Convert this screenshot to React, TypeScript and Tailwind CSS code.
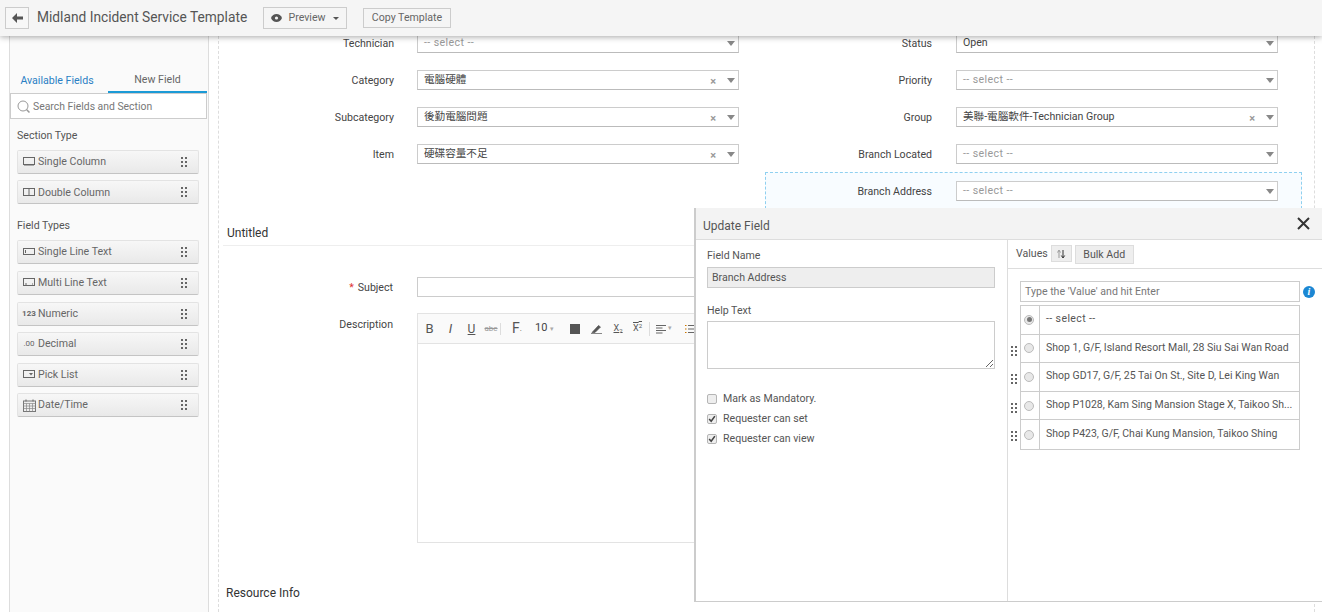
import { ReactNode } from "react";

const cjk = "font-['Roboto','Noto_Sans_CJK_TC',sans-serif]";

function Grip({ className = "" }: { className?: string }) {
  return (
    <svg width="6" height="10" viewBox="0 0 6 10" className={className}>
      {[0, 4, 8].map((y) => (
        <g key={y} fill="#666">
          <rect x="0" y={y} width="2" height="2" />
          <rect x="4" y={y} width="2" height="2" />
        </g>
      ))}
    </svg>
  );
}

function Caret() {
  return <span className="h-0 w-0 border-x-[4px] border-t-[5px] border-x-transparent border-t-[#888]" />;
}

function Select({ value, placeholder, clear }: { value?: string; placeholder?: boolean; clear?: boolean }) {
  return (
    <div className="flex h-[20px] w-[322px] items-center border border-[#ccc] border-b-[#bbb] bg-white pl-[6px] pr-[3px]">
      <span className={`flex-1 leading-[14px] ${placeholder ? "tracking-[0.4px] text-[#999]" : "text-[#444]"} ${cjk}`}>{value}</span>
      {clear && <span className="mr-[11px] mt-[3px] text-[11px] font-bold leading-none text-[#999]">×</span>}
      <Caret />
    </div>
  );
}

function FormRow({ label, side, value, placeholder, clear, active }: { label: string; side: "l" | "r"; value?: string; placeholder?: boolean; clear?: boolean; active?: boolean }) {
  return (
    <div className={`flex h-[37px] border pt-[8px] ${active ? "border-dashed border-[#8fd0f0] bg-[#f8fcff]" : "border-transparent"}`}>
      <span className={`pt-[3px] text-right text-[#444] ${side === "l" ? "w-[174px]" : "w-[166px]"}`}>{label}</span>
      <span className={side === "l" ? "w-[23px]" : "w-[24px]"} />
      <Select value={value} placeholder={placeholder} clear={clear} />
    </div>
  );
}

function FieldButton({ icon, label }: { icon: ReactNode; label: string }) {
  return (
    <div className="flex h-[24px] w-[182px] items-center rounded-[2px] border border-[#e3e3e3] border-b-[#c4c4c4] bg-gradient-to-b from-[#f7f7f7] to-[#e9e9e9] pl-[3px] pr-[11px] text-[#666]">
      <span className="flex w-[16px] justify-center">{icon}</span>
      <span className="ml-[1px] flex-1">{label}</span>
      <Grip />
    </div>
  );
}

const stroke = { fill: "none", stroke: "#666", strokeWidth: 1 };

const icons = {
  single: <svg width="12" height="9" viewBox="0 0 12 9"><rect x="0.5" y="0.5" width="11" height="7" {...stroke} /><path d="M1 8.5h10" stroke="#aaa" /></svg>,
  double: <svg width="12" height="9" viewBox="0 0 12 9"><rect x="0.5" y="0.5" width="11" height="7" {...stroke} /><path d="M6 0v8" stroke="#666" /></svg>,
  line: <svg width="12" height="8" viewBox="0 0 12 8"><rect x="0.5" y="0.5" width="11" height="6" {...stroke} /><path d="M2.5 2v3" stroke="#666" /></svg>,
  multi: <svg width="12" height="9" viewBox="0 0 12 9"><rect x="0.5" y="0.5" width="11" height="7" {...stroke} /><path d="M2 6h2M9 6h1" stroke="#666" /></svg>,
  list: <svg width="12" height="9" viewBox="0 0 12 9"><rect x="0.5" y="0.5" width="11" height="7" {...stroke} /><path d="M6 3h4L8 5.5z" fill="#666" /></svg>,
  date: (
    <svg width="13" height="13" viewBox="0 0 13 13">
      <rect x="0.5" y="2" width="12" height="10.5" fill="#eee" stroke="#777" />
      <path d="M0.5 4.5h12M0.5 7h12M0.5 9.5h12M3.5 4.5v8M6.5 4.5v8M9.5 4.5v8" stroke="#888" strokeWidth="0.7" />
      <path d="M3 0.5v2M10 0.5v2" stroke="#666" />
    </svg>
  ),
};

function CheckRow({ label, checked }: { label: string; checked?: boolean }) {
  return (
    <label className="flex h-[20px] items-center text-[#555]">
      <span className="flex h-[10px] w-[10px] items-center justify-center rounded-[2px] border border-[#b5b5b5] bg-[#eee]">
        {checked && (
          <svg width="8" height="8" viewBox="0 0 7 7"><path d="M1 3.5l1.8 2L6 1" fill="none" stroke="#444" strokeWidth="1.4" /></svg>
        )}
      </span>
      <span className="ml-[6px]">{label}</span>
    </label>
  );
}

function ValueRow({ text, selected, grip = true }: { text: string; selected?: boolean; grip?: boolean }) {
  return (
    <div className="relative flex h-[28.6px] border-b border-[#ccc] last:border-b-0">
      {grip && <Grip className="absolute -left-[10px] top-[11px]" />}
      <span className="flex w-[19px] items-center justify-center border-r border-[#ccc] pr-[2px]">
        <span className="flex h-[10px] w-[10px] items-center justify-center rounded-full border border-[#bbb] bg-[#e8e8e8]">
          {selected && <span className="h-[5px] w-[5px] rounded-full bg-[#777]" />}
        </span>
      </span>
      <span className={`flex flex-1 items-center whitespace-nowrap pb-[2px] pl-[6px] text-[10.5px] text-[#555] ${selected ? "tracking-[0.4px]" : ""}`}>{text}</span>
    </div>
  );
}

function Toolbar() {
  return (
    <div className="flex h-[30px] items-center border-b border-[#e3e3e3] bg-[#fafafa] pl-[1px] text-[#555]">
      <span className="w-[21px] text-center text-[13px]">B</span>
      <span className="w-[21px] text-center text-[13px] italic">I</span>
      <span className="w-[21px] text-center text-[12px] underline">U</span>
      <span className="w-[19px] border-r border-[#ddd] text-center text-[8px] text-[#999] line-through">abc</span>
      <span className="w-[24px] pl-[11px] text-[14px]">F<span className="text-[8px]">·</span></span>
      <span className="w-[42px] pl-[10px] text-[11px] text-[#444]">10 <span className="text-[7px] text-[#aaa]">▾</span></span>
      <span className="ml-[3px] h-[10px] w-[10px] bg-[#555]" />
      <svg width="11" height="11" viewBox="0 0 11 11" className="ml-[11px]"><path d="M1 9.5L7.5 2.5l2 1.5L4 9.5z M0 10.5h11" fill="#555" stroke="#555" strokeWidth="0.7" /></svg>
      <span className="ml-[10px] w-[12px] text-center text-[9px] leading-none underline">X<sub className="text-[6px]">2</sub></span>
      <span className="ml-[7px] w-[13px] text-center text-[9px] leading-none overline">X<sup className="text-[6px]">2</sup></span>
      <span className="ml-[5px] h-[14px] w-px bg-[#ddd]" />
      <svg width="10" height="10" viewBox="0 0 10 10" className="ml-[6px]"><path d="M0 1.5h10M0 4h6.5M0 6.5h10M0 9h6.5" stroke="#666" /></svg>
      <span className="ml-[2px] text-[7px] text-[#aaa]">▾</span>
      <svg width="10" height="10" viewBox="0 0 10 10" className="ml-[13px]"><path d="M3 1.5h7M3 5h7M3 8.5h7" stroke="#666" /><path d="M0 1h1.5v1H0zM0 4.5h1.5v1H0zM0 8h1.5v1H0z" fill="#c70" /></svg>
    </div>
  );
}

function UpdateField() {
  return (
    <aside className="absolute left-[694px] top-[208px] flex h-[394px] w-[628px] flex-col border-b border-l-2 border-[#ccc] bg-white">
      <header className="flex h-[32px] shrink-0 items-center justify-between border-b border-[#ddd] bg-[#f3f3f3] pl-[7px] pr-[12px]">
        <span className="pt-[4px] text-[12px] text-[#555]">Update Field</span>
        <svg width="13" height="13" viewBox="0 0 13 13"><path d="M1 1l11 11M12 1L1 12" stroke="#333" strokeWidth="2" /></svg>
      </header>
      <div className="flex min-h-0 flex-1">
        <div className="w-[312px] border-r border-[#ddd] pl-[11px] pr-[12px]">
          <div className="pt-[8px] text-[#555]">Field Name</div>
          <div className="mt-[3px] flex h-[21px] w-[288px] items-center border border-[#ccc] bg-[#eee] pl-[4px] pt-[1px] text-[#555]">Branch Address</div>
          <div className="mt-[15px] text-[#555]">Help Text</div>
          <textarea readOnly className="mt-[2px] block h-[48px] w-[288px] border border-[#ccc] bg-white" />
          <div className="mt-[20px]">
            <CheckRow label="Mark as Mandatory." />
            <CheckRow label="Requester can set" checked />
            <CheckRow label="Requester can view" checked />
          </div>
        </div>
        <div className="min-w-0 flex-1">
          <div className="flex h-[29px] items-start border-b border-[#ddd] pl-[8px] pt-[5px] text-[#555]">
            <span className="pt-[1px]">Values</span>
            <span className="ml-[3px] flex h-[17px] w-[21px] items-center justify-center border border-[#ddd] bg-[#eee]">
              <svg width="10" height="10" viewBox="0 0 10 10"><path d="M3 9V2M1.5 3.5L3 1l1.5 2.5" fill="none" stroke="#999" /><path d="M7 1v7.5M5.3 6.5L7 9l1.7-2.5" fill="none" stroke="#333" /></svg>
            </span>
            <span className="ml-[3px] flex h-[19px] w-[59px] items-center justify-center border border-[#ddd] bg-[#eee]">Bulk Add</span>
          </div>
          <div className="ml-[12px] mt-[12px] flex items-center">
            <div className="flex h-[21px] w-[280px] items-center border border-[#ccc] pl-[4px] text-[#777]">Type the 'Value' and hit Enter</div>
            <span className="ml-[3px] flex h-[12px] w-[12px] items-center justify-center rounded-full bg-[#1b87d3] font-['Liberation_Serif',serif] text-[10px] font-bold italic leading-none text-white">i</span>
          </div>
          <div className="ml-[12px] mt-[3px] w-[280px] border border-[#ccc]">
            <ValueRow text="-- select --" selected grip={false} />
            <ValueRow text="Shop 1, G/F, Island Resort Mall, 28 Siu Sai Wan Road" />
            <ValueRow text="Shop GD17, G/F, 25 Tai On St., Site D, Lei King Wan" />
            <ValueRow text="Shop P1028, Kam Sing Mansion Stage X, Taikoo Sh..." />
            <ValueRow text="Shop P423, G/F, Chai Kung Mansion, Taikoo Shing" />
          </div>
        </div>
      </div>
    </aside>
  );
}

export default function App() {
  return (
    <div className="relative flex h-[612px] w-[1322px] flex-col overflow-hidden bg-white font-['Roboto',sans-serif] text-[10.6px]">
      {/* Top bar */}
      <div className="relative z-10 flex h-[36px] shrink-0 items-center bg-[#f5f5f5] pl-[5px] shadow-[0_1px_6px_rgba(0,0,0,0.35)]">
        <button className="flex h-[22px] w-[24px] items-center justify-center border border-[#ccc] bg-[#f7f7f7]">
          <svg width="11" height="10" viewBox="0 0 11 10"><path d="M5 0L0 5l5 5V6.5h6v-3H5z" fill="#555" /></svg>
        </button>
        <h1 className="ml-[8px] w-[210px] whitespace-nowrap pb-[1px] text-[13.75px] text-[#555]">Midland Incident Service Template</h1>
        <button className="ml-[16px] flex h-[22px] w-[84px] items-center justify-center border border-[#ccc] text-[#666]">
          <svg width="11" height="8" viewBox="0 0 11 8" className="mr-[6px]"><path d="M5.5 0C3 0 1 1.6 0 4c1 2.4 3 4 5.5 4S10 6.4 11 4C10 1.6 8 0 5.5 0z" fill="#555" /><circle cx="5.5" cy="4" r="1.6" fill="#f5f5f5" /></svg>
          Preview
          <span className="ml-[7px] h-0 w-0 border-x-[3px] border-t-[3px] border-x-transparent border-t-[#555]" />
        </button>
        <button className="ml-[16px] h-[20px] w-[88px] border border-[#ccc] text-[#666]">Copy Template</button>
      </div>

      <div className="flex min-h-0 flex-1 bg-white">
        {/* Field palette */}
        <div className="ml-[9px] w-[200px] shrink-0 border-x border-[#ddd] bg-[#fafafa]">
          <div className="mt-[33px] flex h-[24px]">
            <span className="flex w-[98px] items-center justify-center pb-[1px] pr-[4px] text-[#2a7fc4]">Available Fields</span>
            <span className="flex w-[99px] items-center justify-center border-b-2 border-[#1b9ad6] text-[#666]">New Field</span>
          </div>
          <div className="flex h-[26px] w-[197px] items-center border border-[#ccc] bg-white pl-[6px] pt-[1px] text-[10.4px] text-[#777]">
            <svg width="14" height="14" viewBox="0 0 14 14" className="mr-[2px]"><circle cx="6" cy="6" r="5" fill="none" stroke="#999" /><path d="M9.5 9.5l3 3" stroke="#999" strokeWidth="1.5" /></svg>
            Search Fields and Section
          </div>
          <div className="pl-[7px]">
            <div className="mt-[9px] text-[#555]">Section Type</div>
            <div className="mt-[6px] flex flex-col gap-[6.6px]">
              <FieldButton icon={icons.single} label="Single Column" />
              <FieldButton icon={icons.double} label="Double Column" />
            </div>
            <div className="mt-[14px] text-[#555]">Field Types</div>
            <div className="mt-[6px] flex flex-col gap-[6.6px]">
              <FieldButton icon={icons.line} label="Single Line Text" />
              <FieldButton icon={icons.multi} label="Multi Line Text" />
              <FieldButton icon={<span className="text-[8px] font-bold leading-none">123</span>} label="Numeric" />
              <FieldButton icon={<span className="text-[8px] leading-none">.00</span>} label="Decimal" />
              <FieldButton icon={icons.list} label="Pick List" />
              <FieldButton icon={icons.date} label="Date/Time" />
            </div>
          </div>
        </div>

        {/* Form canvas */}
        <div className="ml-[9px] w-[1097px] shrink-0 border-x border-dashed border-[#ddd]">
          <div className="-mt-[12px] flex">
            <div className="w-[546px]">
              <FormRow side="l" label="Technician" value="-- select --" placeholder />
              <FormRow side="l" label="Category" value="電腦硬體" clear />
              <FormRow side="l" label="Subcategory" value="後勤電腦問題" clear />
              <FormRow side="l" label="Item" value="硬碟容量不足" clear />
            </div>
            <div className="w-[537px]">
              <FormRow side="r" label="Status" value="Open" />
              <FormRow side="r" label="Priority" value="-- select --" placeholder />
              <FormRow side="r" label="Group" value="美聯-電腦軟件-Technician Group" clear />
              <FormRow side="r" label="Branch Located" value="-- select --" placeholder />
              <FormRow side="r" label="Branch Address" value="-- select --" placeholder active />
            </div>
          </div>

          <div className="ml-[4px] mt-[14px] h-[23px] border-b border-[#eee] pl-[4px] pt-[1px] text-[12px] text-[#333]">Untitled</div>

          <div className="mt-[31px] flex">
            <span className="w-[174px] pt-[3px] text-right text-[#444]"><span className="mr-[4px] text-[#d33]">*</span>Subject</span>
            <span className="w-[24px]" />
            <div className="h-[20px] w-[700px] border border-[#ccc] bg-white" />
          </div>
          <div className="mt-[16px] flex">
            <span className="w-[174px] pt-[4px] text-right text-[#444]">Description</span>
            <span className="w-[24px]" />
            <div className="h-[230px] w-[700px] border border-[#e3e3e3] bg-white">
              <Toolbar />
            </div>
          </div>

          <div className="ml-[7px] mt-[41px] text-[12px] text-[#333]">Resource Info</div>
        </div>
      </div>

      <UpdateField />
    </div>
  );
}
